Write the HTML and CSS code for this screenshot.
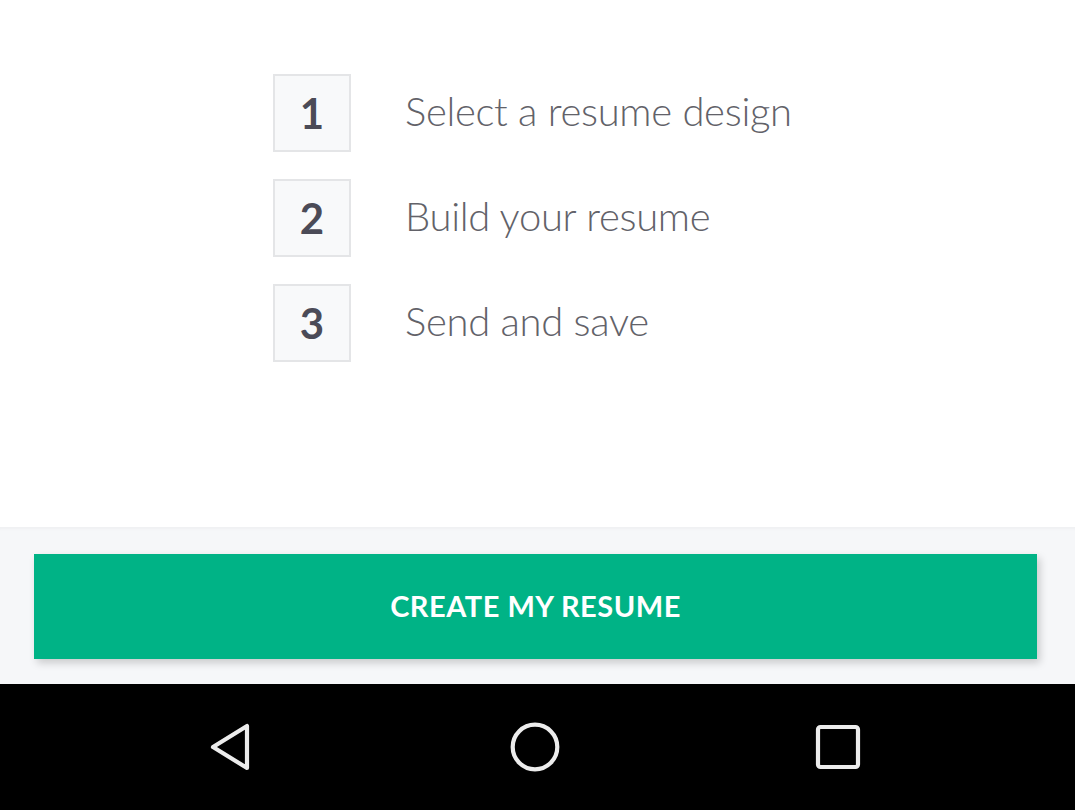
FILE: index.html
```html
<!DOCTYPE html>
<html lang="en">
<head>
<meta charset="utf-8">
<title>Create resume</title>
<link rel="stylesheet" href="styles.css">
</head>
<body>
<div class="screen">
  <main class="content">
    <ol class="steps">
      <li class="step"><span class="num">1</span><span class="label">Select a resume design</span></li>
      <li class="step"><span class="num">2</span><span class="label">Build your resume</span></li>
      <li class="step"><span class="num">3</span><span class="label">Send and save</span></li>
    </ol>
  </main>
  <footer class="action-bar">
    <button class="cta" type="button">CREATE MY RESUME</button>
  </footer>
  <nav class="navbar">
    <svg class="nav-icon back" width="48" height="52" viewBox="0 0 48 52" aria-hidden="true">
      <path d="M40 5 L40 47 L6 26 Z" fill="none" stroke="#ececec" stroke-width="4.2" stroke-linejoin="round"/>
    </svg>
    <svg class="nav-icon home" width="52" height="52" viewBox="0 0 52 52" aria-hidden="true">
      <circle cx="26" cy="26" r="22.3" fill="none" stroke="#ececec" stroke-width="4.2"/>
    </svg>
    <svg class="nav-icon recent" width="48" height="48" viewBox="0 0 48 48" aria-hidden="true">
      <rect x="4" y="4" width="40" height="40" rx="2.5" fill="none" stroke="#ececec" stroke-width="4.2"/>
    </svg>
  </nav>
</div>
</body>
</html>
```
FILE: styles.css
```css
* { box-sizing: border-box; }
html, body {
  margin: 0;
  padding: 0;
  background: #ffffff;
}
body {
  font-family: "Lato", "Open Sans", "Liberation Sans", sans-serif;
}
.screen {
  width: 1075px;
  height: 810px;
  display: flex;
  flex-direction: column;
  overflow: hidden;
}
.content {
  height: 527px;
  background: #ffffff;
  padding: 74px 0 0 273px;
}
.steps {
  list-style: none;
  margin: 0;
  padding: 0;
  display: flex;
  flex-direction: column;
  gap: 27px;
}
.step {
  display: flex;
  align-items: center;
  gap: 54px;
  height: 78px;
}
.num {
  width: 78px;
  height: 78px;
  flex: none;
  border: 2px solid #e4e5e7;
  background: #f8f9fa;
  display: flex;
  align-items: center;
  justify-content: center;
  font-weight: 700;
  font-size: 42px;
  color: #4b4b57;
}
.label {
  font-weight: 300;
  font-size: 40px;
  color: #626269;
  letter-spacing: -0.3px;
  padding-bottom: 4px;
}
.action-bar {
  height: 157px;
  background: #f6f7f9;
  box-shadow: inset 0 3px 3px -2px rgba(0,0,0,0.03);
  border-top: 1px solid #f0f1f3;
  padding: 26px 0 0 34px;
}
.cta {
  display: block;
  width: 1003px;
  height: 105px;
  border: none;
  border-radius: 0;
  background: #00b386;
  color: #ffffff;
  font-family: "Lato", "Open Sans", "Liberation Sans", sans-serif;
  font-weight: 700;
  font-size: 29px;
  letter-spacing: 0.5px;
  box-shadow: 3px 4px 8px rgba(0,0,0,0.18);
  cursor: pointer;
  padding: 0 0 3px 0;
}
.navbar {
  height: 126px;
  background: #000000;
  display: flex;
  align-items: center;
  padding-bottom: 1px;
}
.nav-icon { display: block; flex: none; }
.back { margin-left: 207px; }
.home { margin-left: 254px; }
.recent { margin-left: 253px; }
```
